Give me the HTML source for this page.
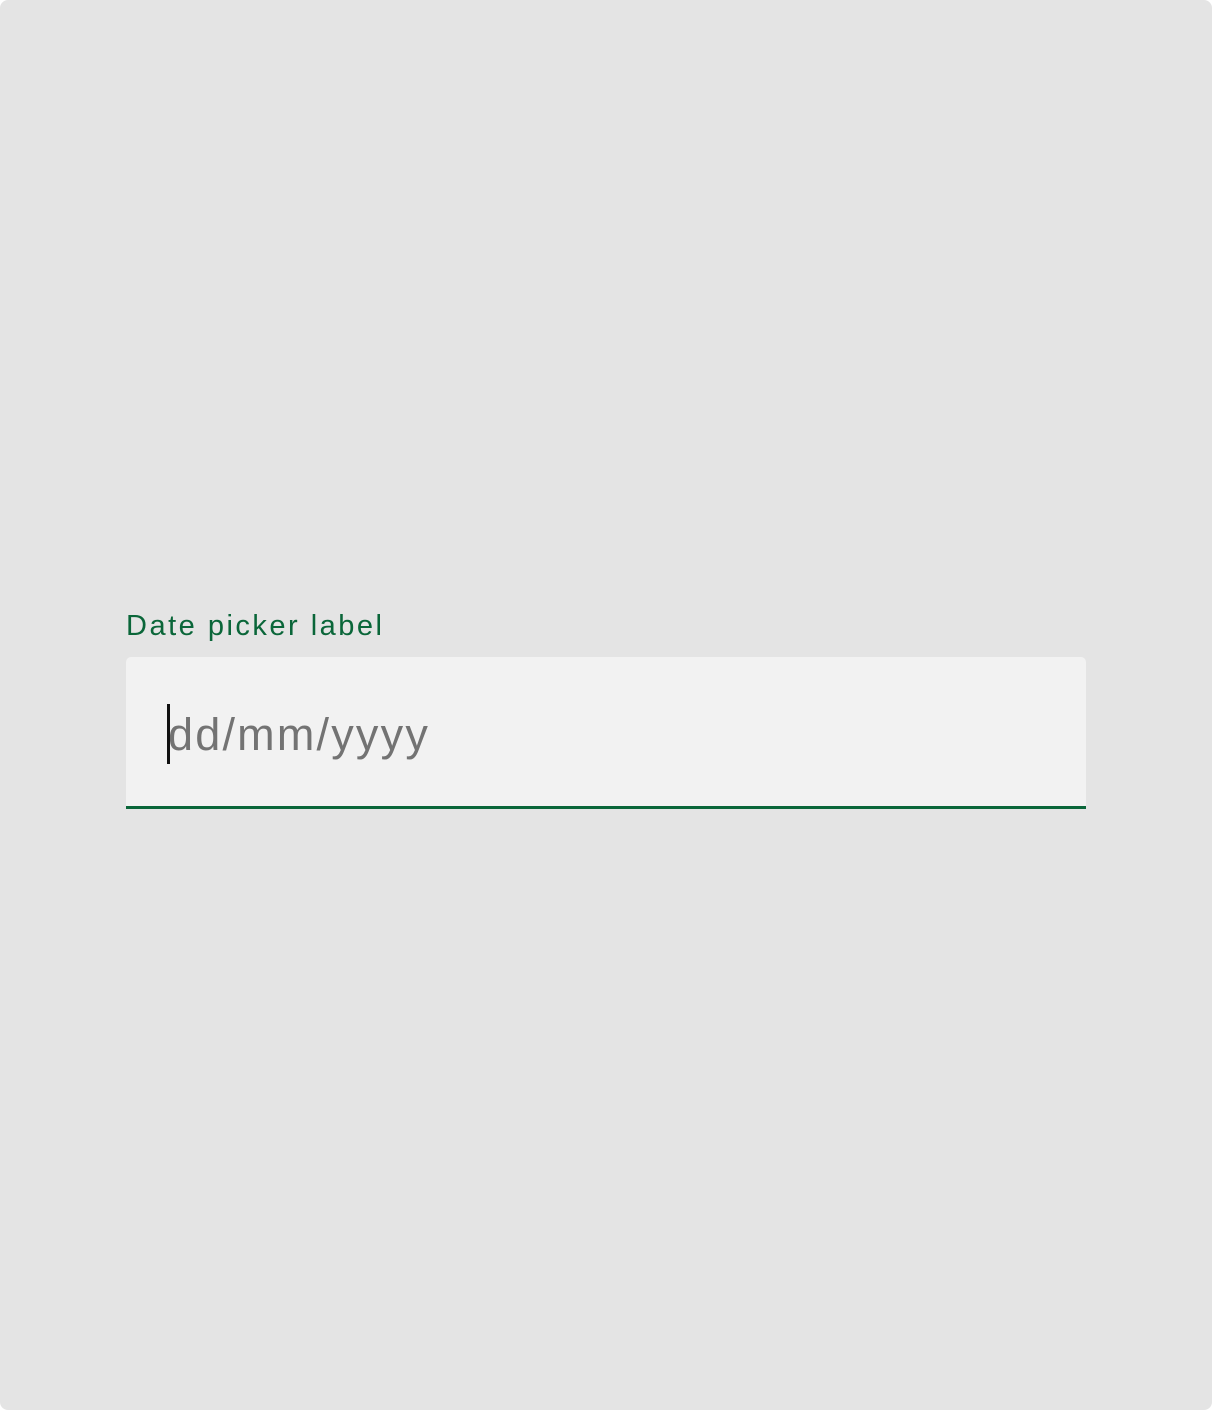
<!DOCTYPE html>
<html><head><style>
html,body{margin:0;padding:0;background:#fff;}
.page{width:1212px;height:1410px;background:#e4e4e4;border-radius:8px;position:relative;overflow:hidden;font-family:"Liberation Sans",sans-serif;}
.label{position:absolute;left:126px;top:608px;font-size:29px;color:#0a6639;letter-spacing:2.5px;line-height:36px;}
.box{position:absolute;left:126px;top:657px;width:960px;height:149px;background:#f2f2f2;border-radius:5px 5px 0 0;border-bottom:3px solid #0a6639;}
.ph{position:absolute;left:168px;top:707px;font-size:45px;line-height:56px;color:#737373;letter-spacing:2.2px;}
.cur{position:absolute;left:167px;top:704px;width:3px;height:60px;background:#111;}
</style></head><body><div class="page">
<div class="label">Date picker label</div>
<div class="box"></div>
<div class="ph">dd/mm/yyyy</div>
<div class="cur"></div>
</div></body></html>
